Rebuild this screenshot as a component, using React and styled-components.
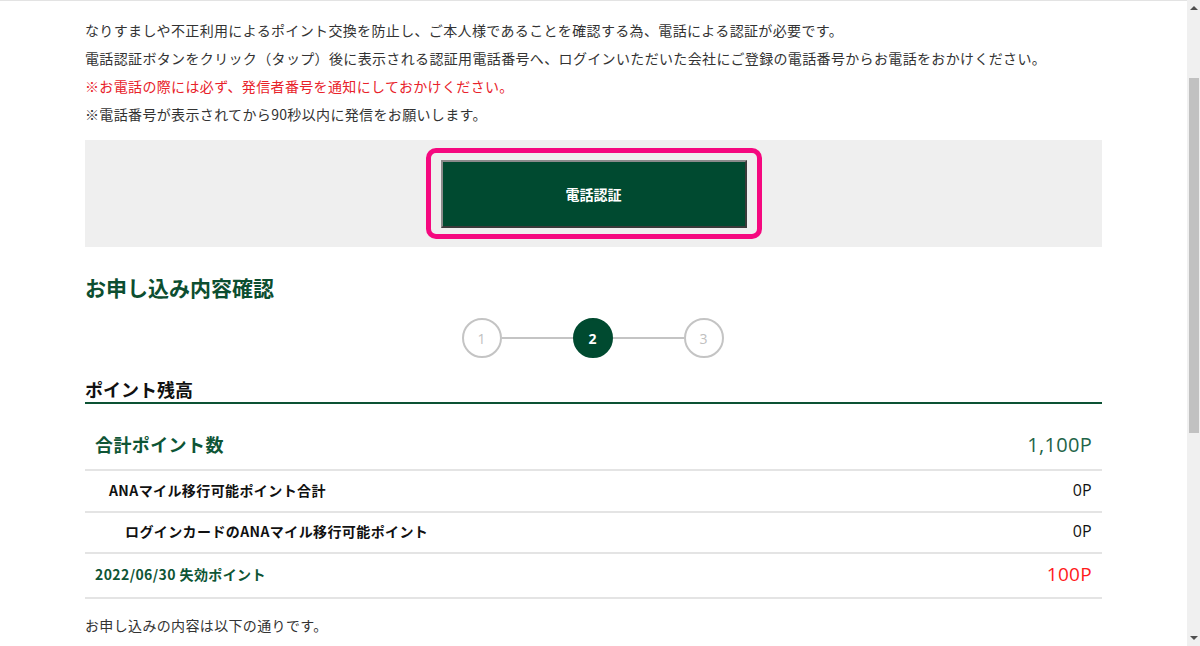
import React from "react";
import styled, { createGlobalStyle } from "styled-components";

const GlobalStyle = createGlobalStyle`
  html, body {
    margin: 0;
    padding: 0;
    height: 100%;
    overflow: hidden;
    background: #fff;
  }
  body {
    font-family: "Noto Sans CJK JP", "Noto Sans", sans-serif;
    color: #333;
    border-top: 1px solid #e3e3e3;
    box-sizing: border-box;
  }
`;

const Page = styled.div`
  width: 1017px;
  margin-left: 85px;
  padding-top: 15px;
`;

const Notes = styled.div`
  font-size: 14px;
  line-height: 28px;
  margin-bottom: 12px;
`;

const Note = styled.p`
  margin: 0;
  color: ${(p) => (p.$alert ? "#e8222a" : "#333")};
  letter-spacing: 0.35px;
`;

const AuthBox = styled.div`
  background: #efefef;
  padding: 8px 0;
  display: flex;
  justify-content: center;
`;

const Highlight = styled.div`
  border: 5px solid #f5087f;
  border-radius: 10px;
  padding: 7px 10px 6px;
`;

const PhoneButton = styled.button`
  width: 306px;
  height: 68px;
  background: #004a30;
  border: 2px solid;
  border-color: #8a8a8a #3a3a3a #3a3a3a #8a8a8a;
  color: #fff;
  font-family: inherit;
  font-size: 14px;
  font-weight: bold;
  cursor: pointer;
  display: block;
`;

const Title = styled.h2`
  margin: 26px 0 17px;
  font-size: 21px;
  line-height: 28px;
  font-weight: bold;
  color: #0c4e30;
`;

const Steps = styled.div`
  display: flex;
  align-items: center;
  justify-content: center;
  padding-right: 2px;
`;

const Step = styled.div`
  width: 36px;
  height: 36px;
  border-radius: 50%;
  border: 2px solid ${(p) => (p.$active ? "#004a30" : "#c4c4c4")};
  background: ${(p) => (p.$active ? "#004a30" : "#fff")};
  color: ${(p) => (p.$active ? "#fff" : "#c0c0c0")};
  font-family: "Open Sans", "Noto Sans", sans-serif;
  font-size: 14px;
  font-weight: ${(p) => (p.$active ? "bold" : "normal")};
  display: flex;
  align-items: center;
  justify-content: center;
`;

const StepLine = styled.div`
  width: 71px;
  height: 2px;
  background: #c4c4c4;
`;

const SectionHead = styled.h3`
  margin: 18px 0 0;
  font-size: 18px;
  line-height: 26px;
  font-weight: bold;
  color: #111;
  border-bottom: 2px solid #0c5234;
`;

const Table = styled.div`
  margin-top: 18px;
`;

const Row = styled.div`
  display: flex;
  align-items: center;
  justify-content: space-between;
  height: ${(p) => p.$h - 3}px;
  padding: 0 10px 3px ${(p) => p.$indent}px;
  border-bottom: 2px solid #e4e4e4;
  box-sizing: content-box;
`;

const Label = styled.span`
  font-size: ${(p) => (p.$big ? 18 : 14)}px;
  font-weight: bold;
  letter-spacing: 0.4px;
  color: ${(p) => (p.$green ? "#0e5535" : "#111")};
`;

const Value = styled.span`
  font-family: "Open Sans", "Noto Sans", sans-serif;
  font-size: ${(p) => p.$size}px;
  letter-spacing: 0.3px;
  color: ${(p) => p.$color || "#111"};
`;

const Footer = styled.p`
  margin: 12px 0 0;
  font-size: 14px;
  line-height: 28px;
  letter-spacing: 0.35px;
`;

const Scrollbar = styled.div`
  position: fixed;
  top: 0;
  right: 0;
  width: 13px;
  height: 100%;
  background: #f0f0f0;
`;

const Thumb = styled.div`
  position: absolute;
  left: 2px;
  right: 1px;
  top: 78px;
  height: 355px;
  background: #c1c1c1;
`;

const Arrow = styled.div`
  position: absolute;
  left: 3px;
  width: 0;
  height: 0;
  border-left: 4px solid transparent;
  border-right: 4px solid transparent;
  ${(p) =>
    p.$up
      ? "top: 6px; border-bottom: 4px solid #505050;"
      : "bottom: 6px; border-top: 4px solid #505050;"}
`;

const rows = [
  { label: "合計ポイント数", value: "1,100P", indent: 10, h: 47, big: true, green: true, size: 20, color: "#1f6448" },
  { label: "ANAマイル移行可能ポイント合計", value: "0P", indent: 24, h: 40, size: 16 },
  { label: "ログインカードのANAマイル移行可能ポイント", value: "0P", indent: 40, h: 39, size: 16 },
  { label: "2022/06/30 失効ポイント", value: "100P", indent: 10, h: 43, green: true, size: 19, color: "#ff1a1a" },
];

export default function App() {
  return (
    <>
      <GlobalStyle />
      <Page>
        <Notes>
          <Note>なりすましや不正利用によるポイント交換を防止し、ご本人様であることを確認する為、電話による認証が必要です。</Note>
          <Note>電話認証ボタンをクリック（タップ）後に表示される認証用電話番号へ、ログインいただいた会社にご登録の電話番号からお電話をおかけください。</Note>
          <Note $alert>※お電話の際には必ず、発信者番号を通知にしておかけください。</Note>
          <Note>※電話番号が表示されてから90秒以内に発信をお願いします。</Note>
        </Notes>

        <AuthBox>
          <Highlight>
            <PhoneButton>電話認証</PhoneButton>
          </Highlight>
        </AuthBox>

        <Title>お申し込み内容確認</Title>

        <Steps>
          <Step>1</Step>
          <StepLine />
          <Step $active>2</Step>
          <StepLine />
          <Step>3</Step>
        </Steps>

        <SectionHead>ポイント残高</SectionHead>

        <Table>
          {rows.map((r) => (
            <Row key={r.label} $indent={r.indent} $h={r.h}>
              <Label $big={r.big} $green={r.green}>{r.label}</Label>
              <Value $size={r.size} $color={r.color}>{r.value}</Value>
            </Row>
          ))}
        </Table>

        <Footer>お申し込みの内容は以下の通りです。</Footer>
      </Page>

      <Scrollbar>
        <Arrow $up />
        <Thumb />
        <Arrow />
      </Scrollbar>
    </>
  );
}
